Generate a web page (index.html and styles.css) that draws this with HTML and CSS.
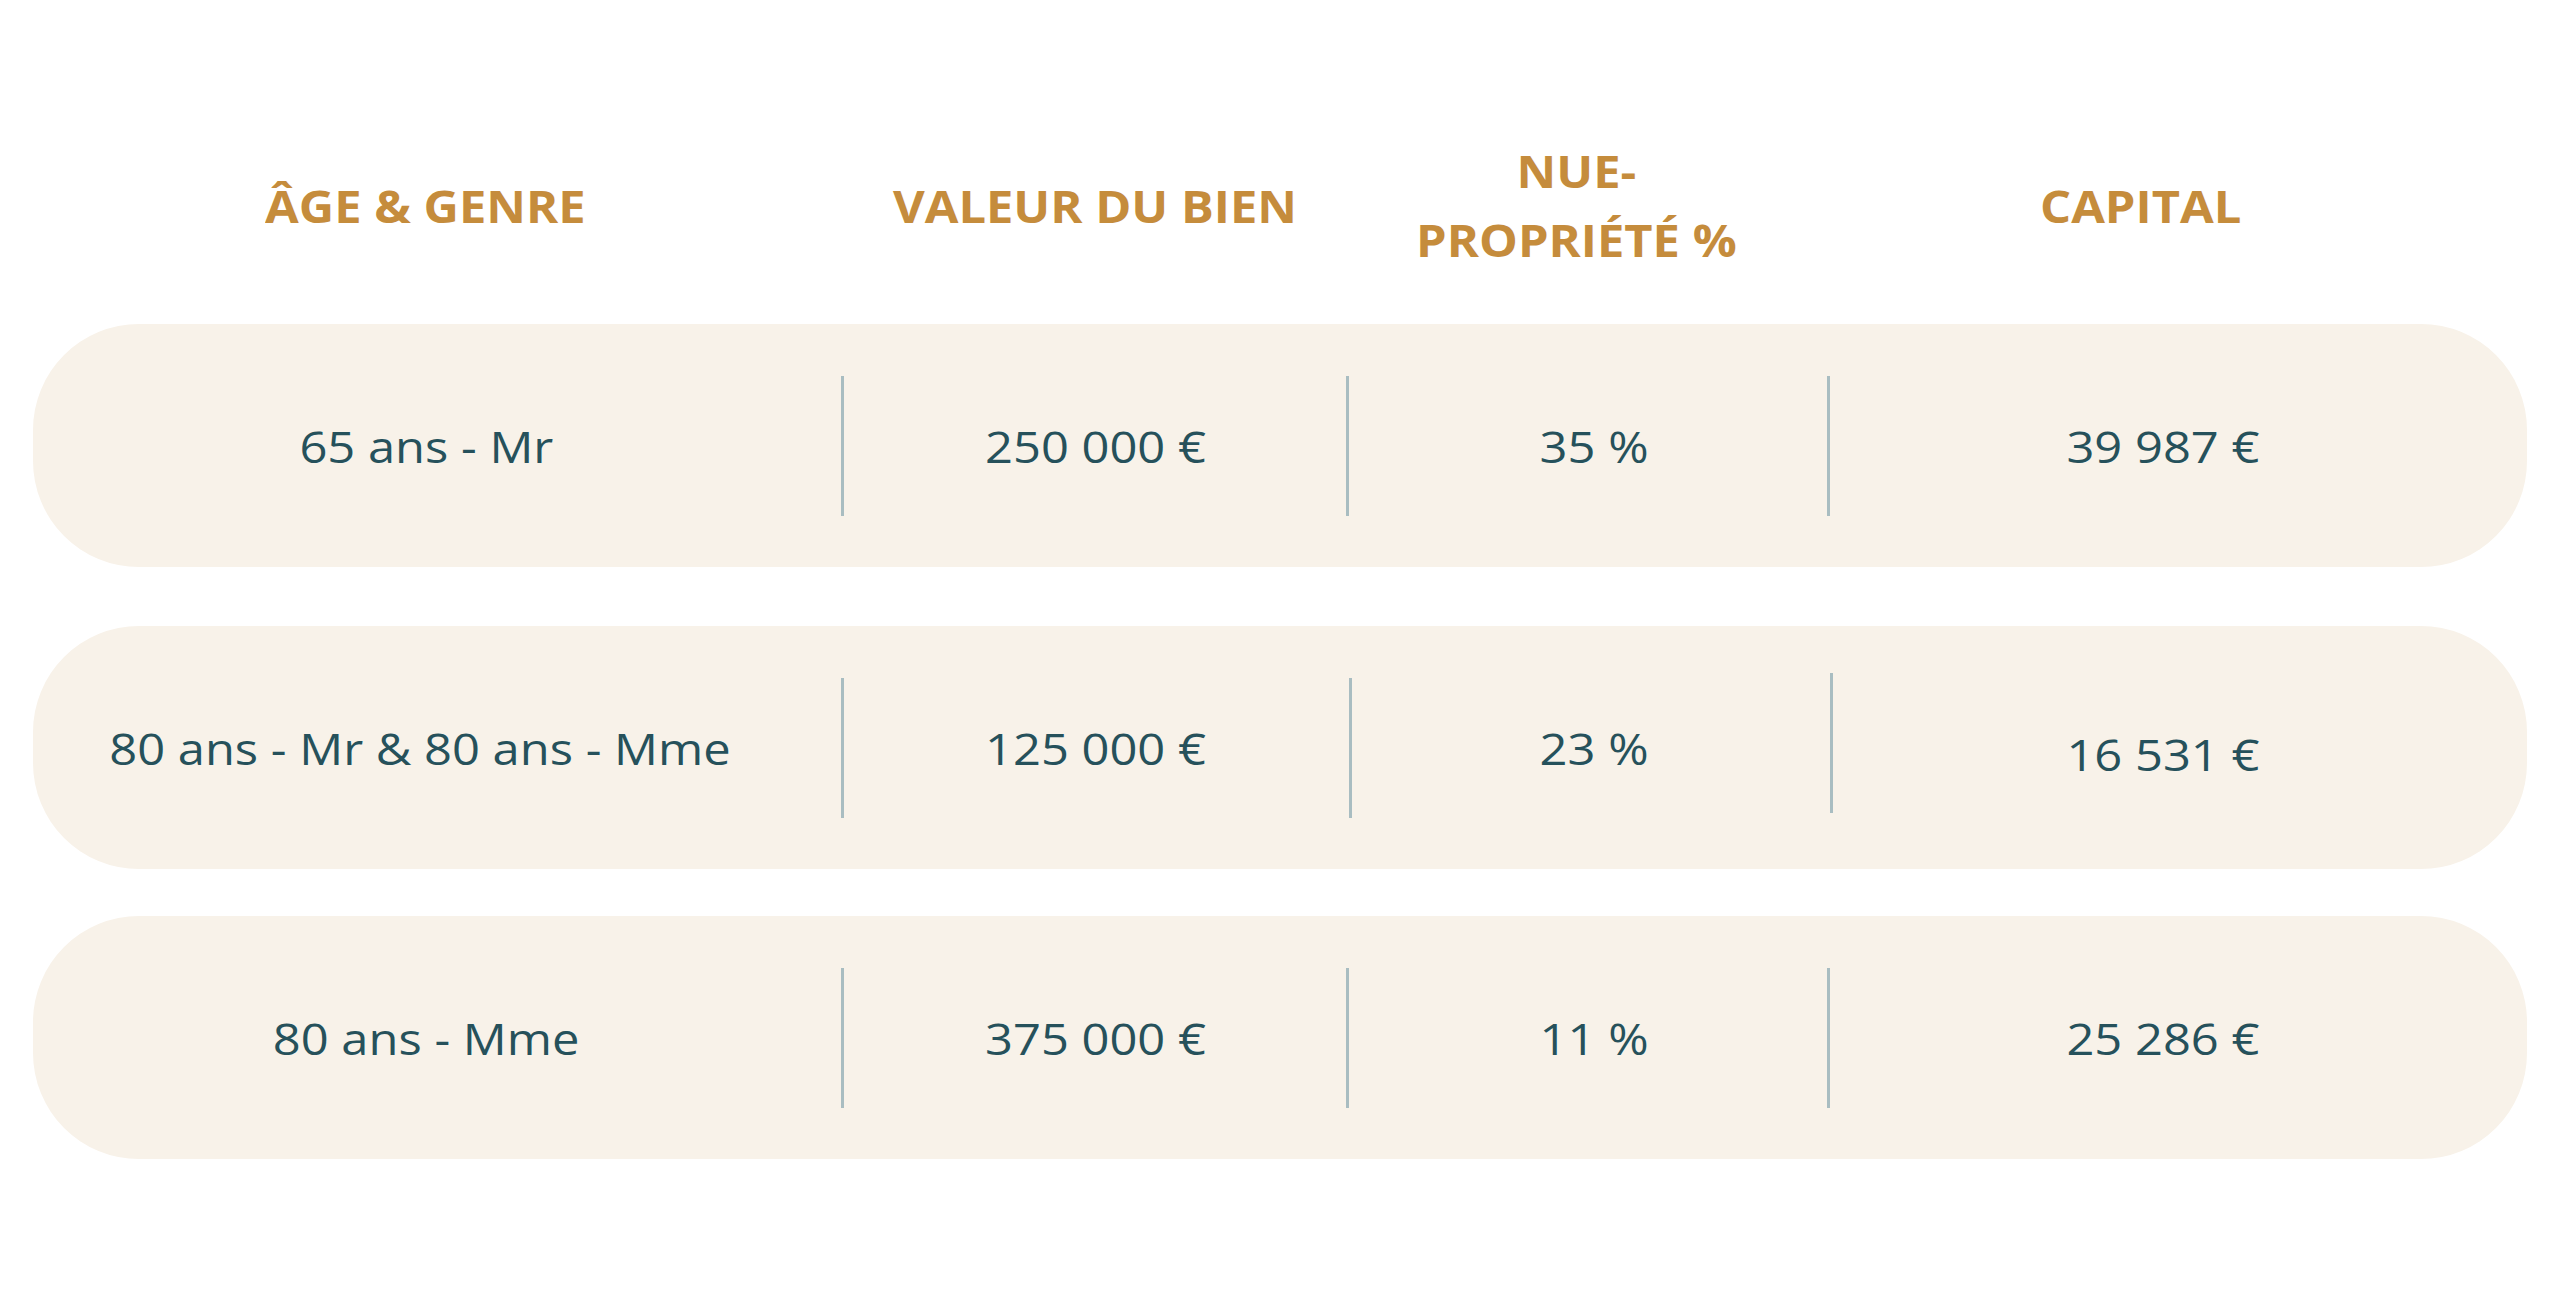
FILE: index.html
```html
<!DOCTYPE html>
<html lang="fr">
<head>
<meta charset="utf-8">
<title>Tableau nue-propriété</title>
<link rel="stylesheet" href="styles.css">
</head>
<body>
<main class="table">
  <div class="head">
    <div class="hc c1"><span class="t">ÂGE &amp; GENRE</span></div>
    <div class="sp"></div>
    <div class="hc c2"><span class="t">VALEUR DU BIEN</span></div>
    <div class="sp"></div>
    <div class="hc c3"><span class="t">NUE-<br>PROPRIÉTÉ %</span></div>
    <div class="sp"></div>
    <div class="hc c4"><span class="t">CAPITAL</span></div>
  </div>

  <div class="row r1">
    <div class="cell c1"><span class="t">65 ans - Mr</span></div>
    <div class="div"></div>
    <div class="cell c2"><span class="t">250 000 €</span></div>
    <div class="div"></div>
    <div class="cell c3"><span class="t">35 %</span></div>
    <div class="div"></div>
    <div class="cell c4"><span class="t">39 987 €</span></div>
  </div>

  <div class="row r2">
    <div class="cell c1 wide"><span class="t">80 ans - Mr &amp; 80 ans - Mme</span></div>
    <div class="div"></div>
    <div class="cell c2"><span class="t">125 000 €</span></div>
    <div class="div shift"></div>
    <div class="cell c3"><span class="t">23 %</span></div>
    <div class="div up shift"></div>
    <div class="cell c4 low"><span class="t">16 531 €</span></div>
  </div>

  <div class="row r3">
    <div class="cell c1"><span class="t">80 ans - Mme</span></div>
    <div class="div"></div>
    <div class="cell c2"><span class="t">375 000 €</span></div>
    <div class="div"></div>
    <div class="cell c3"><span class="t">11 %</span></div>
    <div class="div"></div>
    <div class="cell c4"><span class="t">25 286 €</span></div>
  </div>
</main>
</body>
</html>
```

FILE: styles.css
```css
html, body {
  margin: 0;
  padding: 0;
  background: #ffffff;
}

body {
  font-family: "Open Sans", "Liberation Sans", sans-serif;
}

.table {
  padding: 137px 33px 0 33px;
  width: 2494px;
  display: flex;
  flex-direction: column;
}

.head,
.row {
  display: grid;
  grid-template-columns: 808px 3px 502px 3px 478px 3px 1fr;
  align-items: center;
}

.head {
  height: 130px;
}

.t {
  display: inline-block;
  transform: scaleX(1.11);
  transform-origin: center;
  white-space: nowrap;
}

.hc {
  font-weight: 700;
  font-size: 44px;
  line-height: 69px;
  color: #c58c3c;
  text-align: center;
}

.head .c1 { padding-right: 24px; }
.head .c3 { padding-right: 24px; }
.head .c4 { padding-right: 76px; }

.row {
  height: 243px;
  background: #f8f2e9;
  border-radius: 106px;
}

.r1 { margin-top: 57px; }
.r2 { margin-top: 59px; }
.r3 { margin-top: 47px; }

.cell {
  font-size: 44px;
  line-height: 60px;
  color: #26515b;
  text-align: center;
}

.row .c1 { padding-right: 22px; }
.row .c1.wide { padding-right: 34px; }
.row .c3 { padding-left: 12px; }
.row .c4 { padding-right: 32px; }
.row .low { padding-top: 12px; }

.div {
  width: 3px;
  height: 140px;
  background: #a9bdc1;
}

.div.up { margin-bottom: 10px; }
.div.shift { margin-left: 3px; }
```
